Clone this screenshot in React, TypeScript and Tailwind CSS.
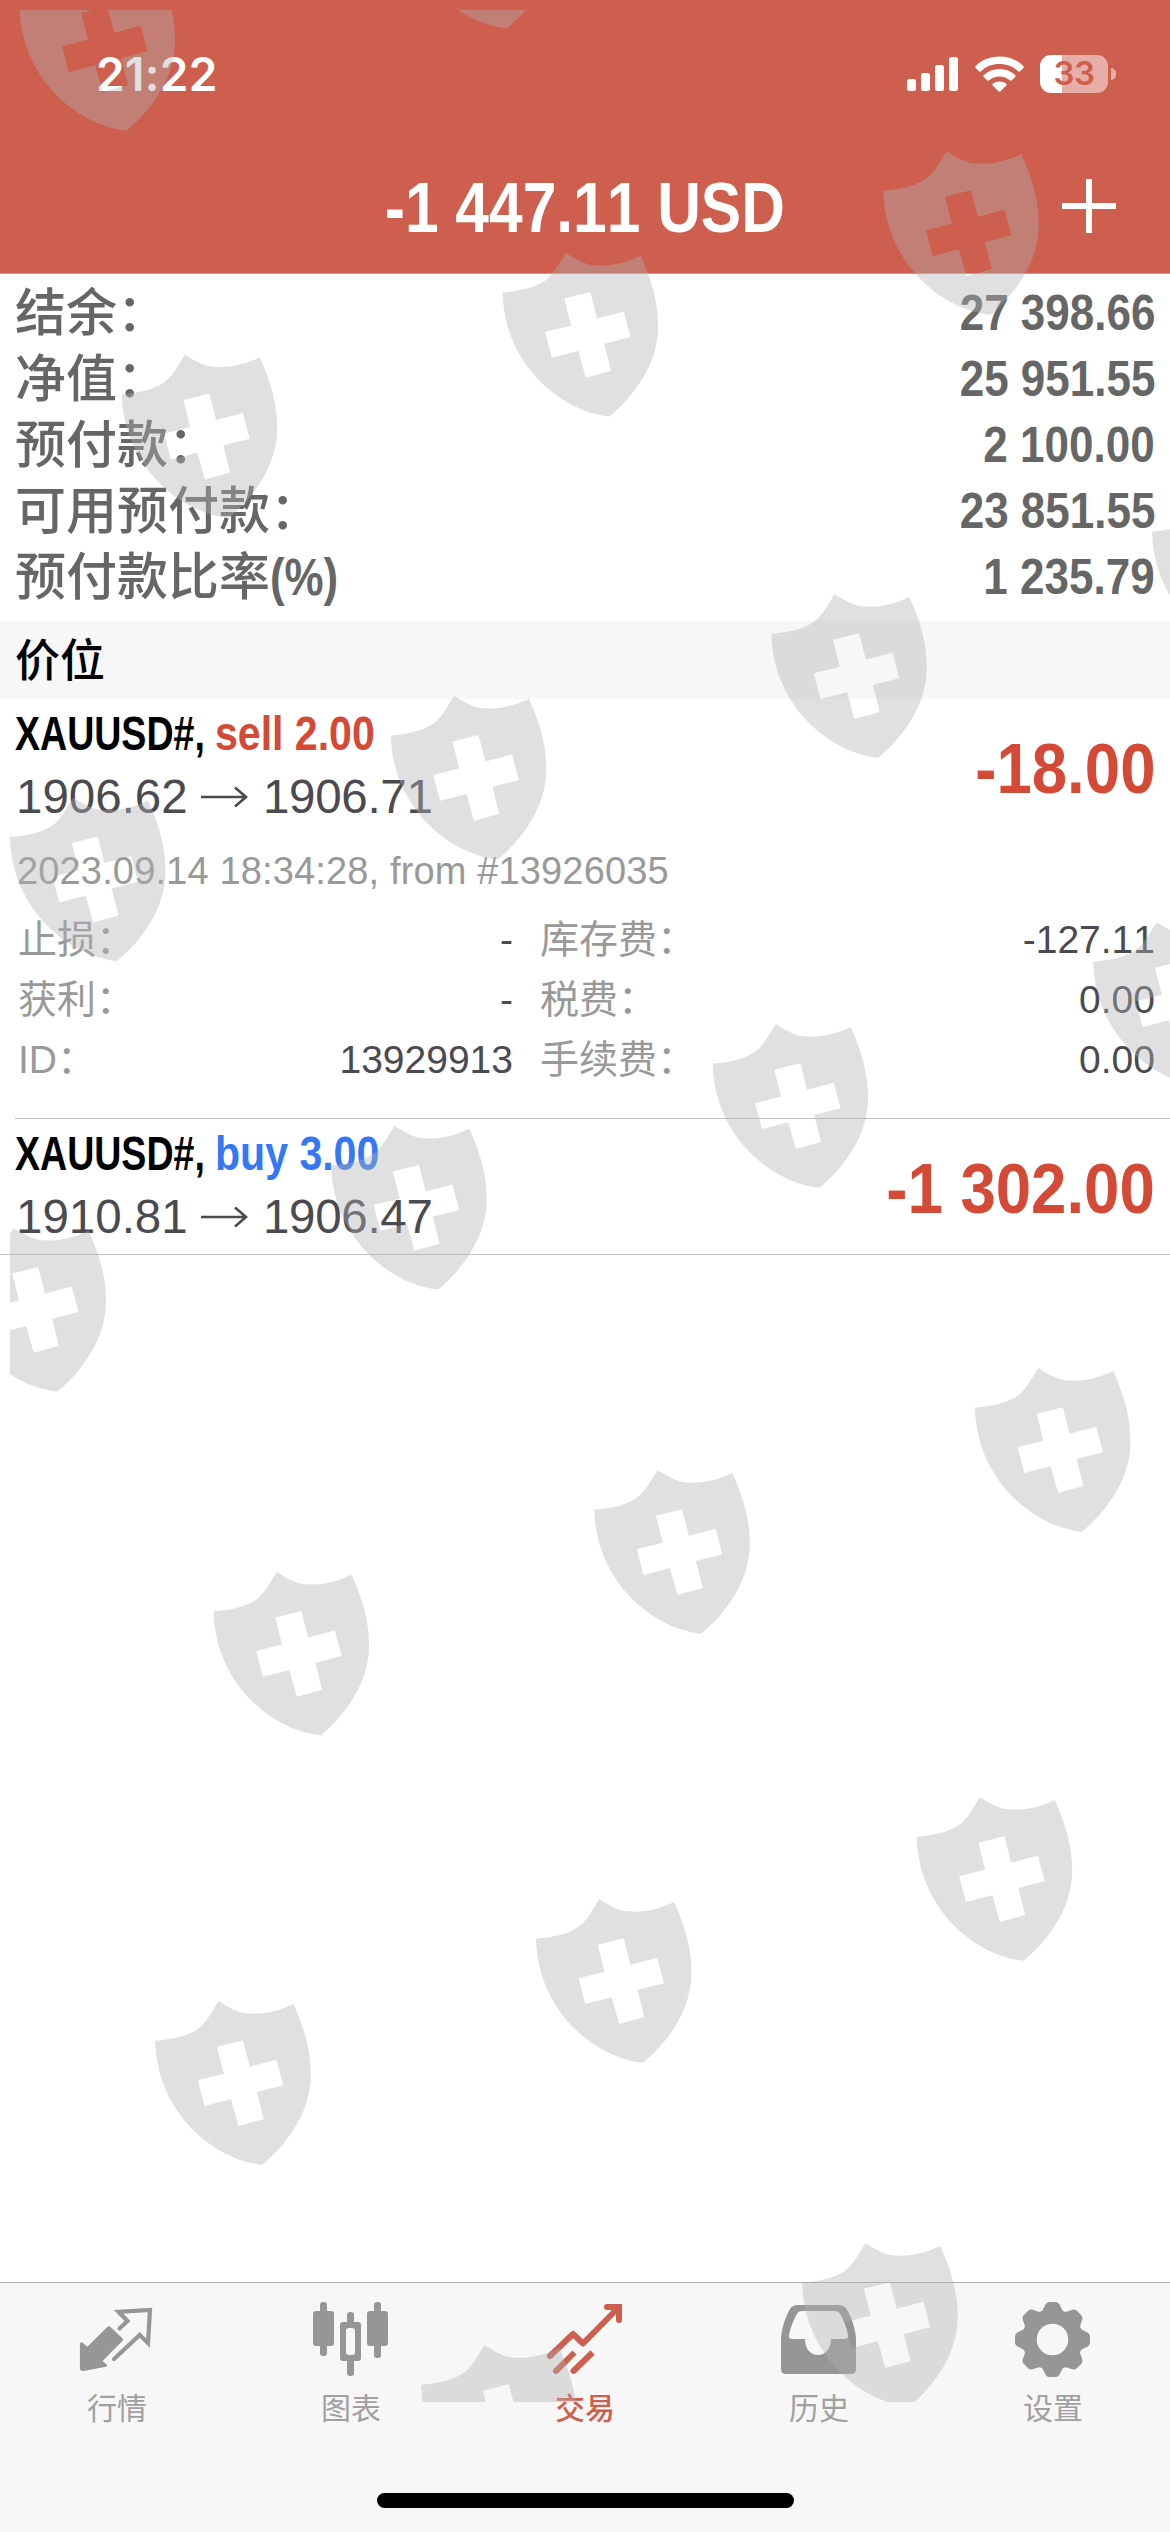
import type { ReactNode } from "react";

const summary = [
  { label: "结余：", value: "27 398.66" },
  { label: "净值：", value: "25 951.55" },
  { label: "预付款：", value: "2 100.00" },
  { label: "可用预付款：", value: "23 851.55" },
  { label: "预付款比率", suffix: "(%)", value: "1 235.79" },
];

const details = [
  { left: "止损：", leftValue: "-", right: "库存费：", rightValue: "-127.11" },
  { left: "获利：", leftValue: "-", right: "税费：", rightValue: "0.00" },
  { left: "ID：", leftValue: "13929913", right: "手续费：", rightValue: "0.00" },
];

// top-left corner of every shield
const shields = [
  [400, -135.5], [19.5, -33],
  [883.3, 151], [502.6, 252.8], [121.7, 354.4],
  [1152, 492], [771.3, 594], [390.8, 695.8], [10, 797.4],
  [1093.3, 922], [712.6, 1024], [331.2, 1125.8], [-49.5, 1227.8],
  [975, 1368], [594.3, 1470], [213.6, 1571.7],
  [916.7, 1797], [536, 1899], [155.3, 2001],
  [802.2, 2243], [421.2, 2345],
];

function Watermark() {
  return (
    <svg className="absolute inset-0 pointer-events-none" width="1170" height="2532" viewBox="0 0 1170 2532">
      <defs>
        <clipPath id="area">
          <rect x="10" y="10" width="1160" height="2392" />
        </clipPath>
      </defs>
      <g clipPath="url(#area)" fill="#b2b2b2" fillOpacity="0.4" fillRule="evenodd">
        {shields.map(([x, y]) => (
          <path
            key={`${x}-${y}`}
            transform={`translate(${x} ${y})`}
            d="M0 39.7C20 38 36 34 45.5 25.5C52.5 19 57.5 9 63.3 0.3C84 13 88 12.6 100 12.7C112 12.6 124 9.5 138.1 3C150 30 155.5 50 155.5 74C155.5 112 130 145 106.9 163.7C59 159 1.5 112 0 39.7ZM61.7 45.7L87.7 39.3L94.5 65.7L121.2 58.7L128 84.3L101.6 91L108.4 118L83.2 125L75.7 98.3L49.3 105L42.5 79.3L68.5 72.7Z"
          />
        ))}
      </g>
    </svg>
  );
}

function StatusBar() {
  return (
    <div className="flex h-[148px] items-center justify-between pl-[96px] pr-[54px]">
      <span className="font-['Inter',sans-serif] text-[46px] font-semibold tracking-[0.3px]">21:22</span>
      <div className="flex items-center">
        <svg width="52" height="34" viewBox="0 0 52 34" fill="currentColor">
          <rect x="0" y="22" width="9" height="12" rx="2.5" />
          <rect x="14" y="16" width="9" height="18" rx="2.5" />
          <rect x="28" y="8" width="9" height="26" rx="2.5" />
          <rect x="42" y="0" width="9" height="34" rx="2.5" />
        </svg>
        <svg className="ml-4" width="49" height="36" viewBox="0 0 49 36" fill="currentColor">
          <path d="M24.5 0.5C34 0.5 42.5 4 48.3 10Q49.2 11 48.3 12L45 15.3Q44 16.2 43 15.2C38 10.5 31.500 8 24.500 8C17.500 8 11 10.500 6 15.200Q5 16.200 4 15.300L0.700 12Q-0.200 11 0.700 10C6.500 4 15 0.500 24.500 0.500Z" />
          <path d="M24.500 13C30.500 13 36 15.200 40.200 19Q41.200 20 40.200 21L36.800 24.300Q35.900 25.200 34.900 24.300C32 21.900 28.500 20.500 24.500 20.500C20.500 20.500 17 21.900 14.100 24.300Q13.100 25.200 12.200 24.300L8.800 21Q7.800 20 8.800 19C13 15.200 18.500 13 24.500 13Z" />
          <path d="M24.500 25.500C27.200 25.500 29.500 26.300 31.200 27.700Q32.200 28.600 31.200 29.600L25.500 35.200Q24.500 36.100 23.500 35.200L17.800 29.600Q16.800 28.600 17.800 27.700C19.500 26.300 21.800 25.500 24.500 25.500Z" />
        </svg>
        <div className="ml-4 flex h-[38px] w-[68px] items-center justify-center rounded-[11px] bg-linear-to-r from-white from-[22px] to-white/50 to-[22px] font-['Inter',sans-serif] text-[33px] font-semibold tracking-[-0.5px] text-[#ce5e4d]">
          33
        </div>
        <div className="ml-[3px] h-[12px] w-[5px] rounded-r-full bg-white/50" />
      </div>
    </div>
  );
}

function Position({ side, volume, from, to, profit }: { side: "sell" | "buy"; volume: string; from: string; to: string; profit: string }) {
  return (
    <div className="flex h-[135px] items-center justify-between pl-[15px] pr-[15px]">
      <div className="pb-[3px]">
        <div className="flex text-[48px] leading-[56px] font-bold whitespace-nowrap">
          <span className="w-[200px] origin-left scale-x-[0.782] text-black">XAUUSD#,</span>
          <span className={side === "sell" ? "origin-left scale-x-[0.855] text-[#d54a36]" : "origin-left scale-x-[0.855] text-[#3478f6]"}>
            {side} {volume}
          </span>
        </div>
        <div className="mt-[7px] flex items-center text-[47.500px] leading-[56px] text-[#4a4a50]">
          <span className="w-[186px] pl-[1px]">{from}</span>
          <svg width="47" height="22" viewBox="0 0 47 22" fill="none" stroke="currentColor" strokeWidth="2.6">
            <path d="M0 11H45M34 1.500L45 11L34 20.500" />
          </svg>
          <span className="ml-[15px] tracking-[-0.3px]">{to}</span>
        </div>
      </div>
      <span className="origin-right scale-x-[0.908] pt-[4px] text-[70px] leading-[80px] font-bold text-[#d54a36]">{profit}</span>
    </div>
  );
}

function Tab({ label, active, children }: { label: string; active?: boolean; children: ReactNode }) {
  return (
    <div className={active ? "flex flex-1 flex-col items-center text-[#ce5e4d]" : "flex flex-1 flex-col items-center text-[#969696]"}>
      <svg width="84" height="84" viewBox="0 0 84 84" fill="currentColor">
        {children}
      </svg>
      <span className={active ? "mt-[11px] text-[30px] leading-[36px] font-medium" : "mt-[11px] text-[30px] leading-[36px] text-[#a0a0a0]"}>{label}</span>
    </div>
  );
}

export default function App() {
  return (
    <div className="relative flex h-[2532px] w-[1170px] flex-col overflow-hidden bg-white font-['Liberation_Sans','Noto_Sans_CJK_SC',sans-serif] [font-kerning:none]">
      {/* Header */}
      <header className="h-[274px] border-b border-[#b5a5a3] bg-[#ce5e4d] text-white">
        <StatusBar />
        <div className="grid h-[125px] grid-cols-[1fr_auto_1fr] items-center pb-[9px]">
          <span />
          <h1 className="scale-x-[0.852] pt-[4px] text-[71px] leading-[80px] font-bold whitespace-nowrap">-1 447.11 USD</h1>
          <svg className="mr-[54px] justify-self-end" width="54" height="54" viewBox="0 0 54 54" stroke="currentColor" strokeWidth="6">
            <path d="M0 27H54M27 0V54" />
          </svg>
        </div>
      </header>

      {/* Account summary */}
      <section className="h-[347px] pt-[6px] text-[#666]">
        {summary.map((row) => (
          <div key={row.label} className="flex h-[66px] items-center justify-between pr-[15px] pl-[15px] leading-[66px]">
            <span className="pt-[2px] text-[51px] font-medium">
              {row.label}
              {row.suffix && <span className="inline-block origin-left scale-x-[0.86] font-bold">{row.suffix}</span>}
            </span>
            <span className="origin-right scale-x-[0.88] text-[50px] font-bold">{row.value}</span>
          </div>
        ))}
      </section>

      <div className="h-[78px] bg-[#f7f7f7] pl-[15px] text-[45px] leading-[81px] font-medium text-black">价位</div>

      {/* Open positions */}
      <main className="flex-1">
        <Position side="sell" volume="2.00" from="1906.62" to="1906.71" profit="-18.00" />
        <div className="h-[284px] pt-[15px]">
          <p className="pl-[17px] text-[38px] leading-[44px] tracking-[0.15px] text-[#999]">2023.09.14 18:34:28, from #13926035</p>
          <div className="mt-[17px] text-[39px] leading-[60px] text-[#4a4a50]">
            {details.map((row) => (
              <div key={row.left} className="grid grid-cols-[495px_615px] gap-x-[27px] pl-[18px]">
                <div className="flex justify-between">
                  <span className="text-[#999]">{row.left}</span>
                  <span>{row.leftValue}</span>
                </div>
                <div className="flex justify-between">
                  <span className="text-[#999]">{row.right}</span>
                  <span>{row.rightValue}</span>
                </div>
              </div>
            ))}
          </div>
        </div>
        <div className="ml-[15px] h-px bg-[#c0c0c0]" />
        <Position side="buy" volume="3.00" from="1910.81" to="1906.47" profit="-1 302.00" />
        <div className="h-px bg-[#c0c0c0]" />
      </main>

      {/* Tab bar */}
      <nav className="flex h-[250px] flex-col justify-between border-t border-[#afafaf] bg-[#f7f7f7] pt-[13px] pb-[24px]">
        <div className="flex">
          <Tab label="行情">
            <path d="M4.900 48.500Q5 45 7.500 46.800L12.300 50.700L32.500 30.800Q34 29.500 35.500 31L47.400 42.300Q48.600 43.500 47.400 45L27.600 65L32 68.700Q33 70.300 31 70.800L8.500 74.900Q4.900 75.200 4.900 72Z" />
            <path d="M44.500 32.500L52.500 25L43.500 15.800L75 14L73 47L64.800 39L39 63" fill="none" stroke="currentColor" strokeWidth="4.200" strokeLinecap="round" />
          </Tab>
          <Tab label="图表">
            <rect x="4" y="15" width="21" height="35" rx="3" />
            <rect x="11" y="6" width="7" height="54" rx="3" />
            <path fillRule="evenodd" d="M34 26H49Q52 26 52 29V62Q52 65 49 65H34Q31 65 31 62V29Q31 26 34 26ZM40 32Q37 32 37 35V56Q37 59 40 59H43Q46 59 46 56V35Q46 32 43 32Z" />
            <path d="M38 27V19Q38 16 41.500 16Q45 16 45 19V27ZM38 64V77Q38 80 41.500 80Q45 80 45 77V64Z" />
            <rect x="58" y="15" width="21" height="35" rx="3" />
            <rect x="65" y="6" width="7" height="56" rx="3" />
          </Tab>
          <Tab label="交易" active>
            <g fill="none" stroke="currentColor" strokeWidth="6">
              <path d="M7 60L30 38L40 47.500L74 13" strokeLinejoin="round" />
              <path d="M64 11H76V24M7 60L8 59M13 75L14 74M30.500 75L31.500 74" strokeLinecap="round" />
              <path d="M13 75L31.500 56.500M30.500 75L49.500 56.500" />
            </g>
          </Tab>
          <Tab label="历史">
            <path
              fillRule="evenodd"
              d="M4 42C5 30 10 17 14 11.500Q16 9 20 9H62Q66 9 68.500 11.500C73 17 78 30 79 42V73Q79 78 74 78H9Q4 78 4 73ZM28 43H15Q11 42.500 12.200 38C14 30 17 23 20 17.500Q21.500 15 24.500 15H58Q61.500 15 63 17.500C66 23 69 30 71 39Q71.500 43 68 43H54C54 52 49 59 41 59C33 59 28 52 28 43Z"
            />
          </Tab>
          <Tab label="设置">
            <circle cx="41.500" cy="43.500" r="23" fill="none" stroke="currentColor" strokeWidth="14.500" />
            {[0, 45, 90, 135, 180, 225, 270, 315].map((angle) => (
              <path
                key={angle}
                transform={`translate(41.500 43.500) rotate(${angle})`}
                d="M-13 -26Q-10 -28 -8 -33Q-6.500 -37.500 -3 -37.500H3Q6.500 -37.500 8 -33Q10 -28 13 -26L0 -20Z"
              />
            ))}
          </Tab>
        </div>
        <div className="mx-auto h-[15px] w-[417px] rounded-full bg-black" />
      </nav>

      <Watermark />
    </div>
  );
}
